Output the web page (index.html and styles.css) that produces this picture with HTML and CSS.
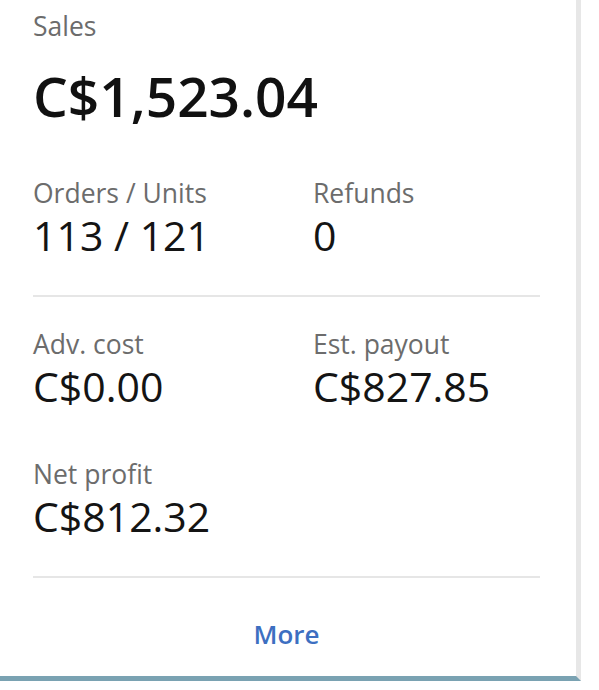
FILE: index.html
```html
<!DOCTYPE html>
<html lang="en">
<head>
<meta charset="utf-8">
<title>Sales</title>
<link rel="stylesheet" href="styles.css">
</head>
<body>
<div class="card">
  <div class="label">Sales</div>
  <div class="total">C$1,523.04</div>
  <div class="grid first">
    <div class="item">
      <div class="label">Orders / Units</div>
      <div class="value">113 / 121</div>
    </div>
    <div class="item">
      <div class="label">Refunds</div>
      <div class="value">0</div>
    </div>
  </div>
  <div class="divider"></div>
  <div class="grid second">
    <div class="item">
      <div class="label">Adv. cost</div>
      <div class="value">C$0.00</div>
    </div>
    <div class="item">
      <div class="label">Est. payout</div>
      <div class="value">C$827.85</div>
    </div>
    <div class="item">
      <div class="label">Net profit</div>
      <div class="value">C$812.32</div>
    </div>
  </div>
  <div class="divider"></div>
  <div class="more">More</div>
</div>
</body>
</html>
```

FILE: styles.css
```css
html, body {
  margin: 0;
  padding: 0;
  background: #ffffff;
}

body {
  font-family: "Open Sans", "Noto Sans", "DejaVu Sans", sans-serif;
  color: #141414;
}

.card {
  width: 507px;
  padding: 8px 36px 24px 33px;
  background: #ffffff;
  border-right: 5px solid #e7e7e7;
  border-bottom: 5px solid #7aa2b2;
}

.label {
  font-size: 26.5px;
  line-height: 36px;
  color: #6c6c6c;
  font-weight: 400;
}

.total {
  margin-top: 22px;
  font-size: 55px;
  line-height: 60px;
  font-weight: 600;
  color: #111111;
}

.grid {
  display: grid;
  grid-template-columns: 280px 1fr;
  row-gap: 46px;
}

.grid.first {
  margin-top: 49px;
}

.grid.second {
  margin-top: 29px;
}

.value {
  font-size: 41px;
  line-height: 48px;
  color: #141414;
}

.divider {
  margin-top: 36px;
  height: 2px;
  background: #e6e6e6;
}

.more {
  margin-top: 38px;
  text-align: center;
  font-size: 26px;
  line-height: 36px;
  font-weight: 600;
  color: #3d6fc1;
}
```
